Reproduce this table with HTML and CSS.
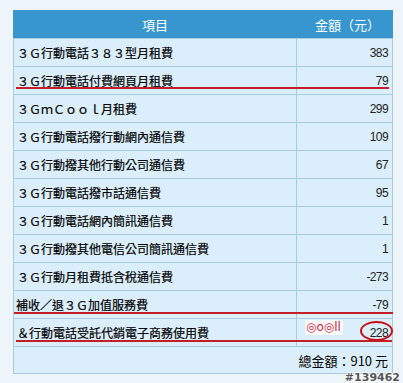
FILE: index.html
```html
<!DOCTYPE html>
<html lang="zh-Hant">
<head>
<meta charset="utf-8">
<link rel="stylesheet" href="styles.css">
</head>
<body>
<div class="wrap">
  <table class="bill">
    <thead>
      <tr><th class="c-item">項目</th><th class="c-amt">金額（元）</th></tr>
    </thead>
    <tbody>
      <tr><td class="item">３Ｇ行動電話３８３型月租費</td><td class="amt">383</td></tr>
      <tr><td class="item">３Ｇ行動電話付費網頁月租費</td><td class="amt">79</td></tr>
      <tr><td class="item">３ＧｍＣｏｏｌ月租費</td><td class="amt">299</td></tr>
      <tr><td class="item">３Ｇ行動電話撥行動網內通信費</td><td class="amt">109</td></tr>
      <tr><td class="item">３Ｇ行動撥其他行動公司通信費</td><td class="amt">67</td></tr>
      <tr><td class="item">３Ｇ行動電話撥市話通信費</td><td class="amt">95</td></tr>
      <tr><td class="item">３Ｇ行動電話網內簡訊通信費</td><td class="amt">1</td></tr>
      <tr><td class="item">３Ｇ行動撥其他電信公司簡訊通信費</td><td class="amt">1</td></tr>
      <tr><td class="item">３Ｇ行動月租費抵含稅通信費</td><td class="amt">-273</td></tr>
      <tr><td class="item tight">補收／退３Ｇ加值服務費</td><td class="amt">-79</td></tr>
      <tr><td class="item">＆行動電話受託代銷電子商務使用費</td><td class="amt">228</td></tr>
      <tr class="total"><td colspan="2">總金額：910 元</td></tr>
    </tbody>
  </table>
  <div class="mark line1"></div>
  <div class="mark line2"></div>
  <div class="mark line3"></div>
  <div class="note">◎o◎ll</div>
  <div class="ring"></div>
</div>
<div class="stamp">#139462</div>
</body>
</html>
```
FILE: styles.css
```css
html, body {
  margin: 0;
  padding: 0;
}
body {
  width: 403px;
  height: 383px;
  overflow: hidden;
  background: #edf5fb;
  font-family: "Noto Sans CJK TC", "Noto Sans", sans-serif;
  position: relative;
}
.wrap {
  position: relative;
  padding: 10px 0 0 13px;
  width: 380px;
}
.bill {
  border-collapse: collapse;
  width: 380px;
  table-layout: fixed;
  background: #dbeefb;
}
.bill th {
  background: #3796cf;
  color: #ffffff;
  font-weight: normal;
  font-size: 13px;
  height: 27px;
  padding: 0;
  border: 1px solid #3796cf;
  border-bottom-color: #a9cbe0;
}
.bill th.c-item {
  width: 282px;
  text-align: center;
}
.bill th.c-amt {
  border-left: 1px solid #8fc2e2;
  text-align: center;
  padding-left: 6px;
}
.bill td {
  border: 1px solid #a9cbe0;
  height: 27px;
  padding: 0 4px 0 3px;
  vertical-align: middle;
  font-size: 12px;
  color: #000;
}
.bill td.item {
  line-height: 14px;
  -webkit-text-stroke: 0.2px #000;
}
.bill td.tight {
  padding-left: 2px;
}
.bill td.amt {
  text-align: right;
  font-family: "Liberation Sans", Arial, sans-serif;
  font-size: 12px;
  letter-spacing: -0.6px;
  color: #222;
  padding-right: 4px;
}
.bill tr.total td {
  text-align: right;
  font-size: 13px;
  height: 26px;
  padding-right: 4px;
}
.mark {
  position: absolute;
  height: 2px;
  background: #c41e28;
}
.line1 { left: 16px; top: 87px; width: 373px; }
.line2 { left: 14px; top: 312px; width: 379px; }
.line3 { left: 16px; top: 340px; width: 376px; }
.note {
  position: absolute;
  left: 305px;
  top: 320px;
  width: 38px;
  height: 15px;
  background: #ffffff;
  color: #d0203a;
  font-family: "DejaVu Sans", sans-serif;
  font-size: 12px;
  line-height: 15px;
  padding-left: 1px;
  box-sizing: border-box;
  white-space: nowrap;
  overflow: hidden;
}
.ring {
  position: absolute;
  left: 360px;
  top: 321px;
  width: 33px;
  height: 20px;
  border: 2px solid #c8101a;
  border-radius: 50%;
  box-sizing: border-box;
}
.stamp {
  position: absolute;
  right: 3px;
  bottom: -1px;
  font-family: "DejaVu Sans", sans-serif;
  font-weight: bold;
  font-size: 11px;
  line-height: 13px;
  color: #555;
  text-shadow: 1px 0 0 #fff, -1px 0 0 #fff, 0 1px 0 #fff, 0 -1px 0 #fff;
}
```
